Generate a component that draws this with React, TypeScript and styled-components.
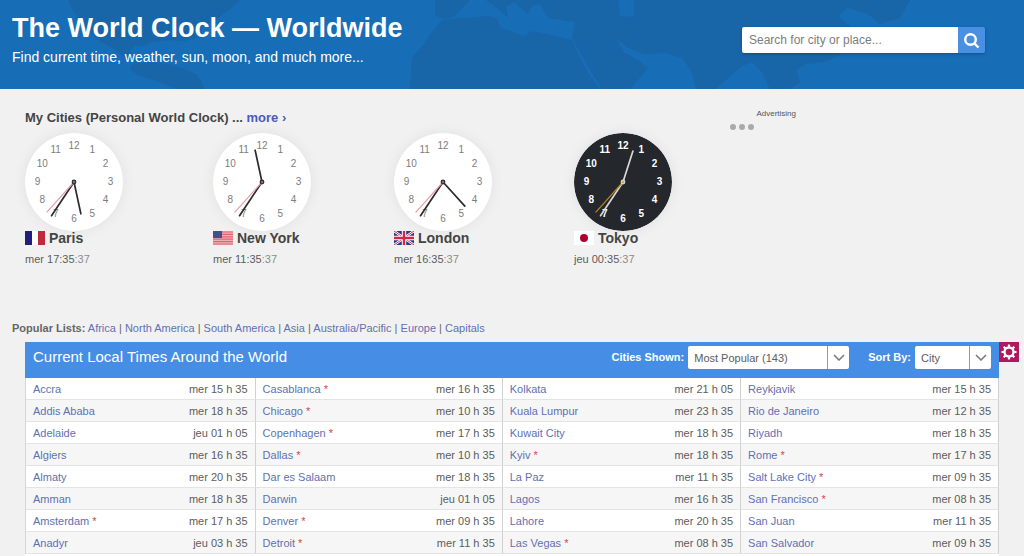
import React from "react";
import styled, { createGlobalStyle } from "styled-components";

const GlobalStyle = createGlobalStyle`
  *, *::before, *::after { box-sizing: border-box; }
  body {
    margin: 0;
    background: #f1f1f1;
    color: #5c5c5c;
    font: 11px/16px "Liberation Sans", Arial, sans-serif;
  }
  a { color: #6170b4; text-decoration: none; }
`;

const Header = styled.header`
  position: relative;
  display: flex;
  justify-content: space-between;
  align-items: flex-start;
  height: 89px;
  padding: 12px 39px 0 12px;
  overflow: hidden;
  background: #176db6;
  color: #fff;
`;

const WorldMap = styled.svg`
  position: absolute;
  inset: 0;
  width: 100%;
  height: 100%;
  fill: #1865a8;
`;

const Heading = styled.div`
  position: relative;
`;

const Title = styled.h1`
  margin: 0;
  font-size: 27px;
  line-height: 32px;
`;

const Subtitle = styled.p`
  margin: 4px 0 0;
  font-size: 14px;
  line-height: 18px;
`;

const Search = styled.form`
  position: relative;
  display: flex;
  margin-top: 15px;
  border-radius: 2px;
  overflow: hidden;
  box-shadow: 0 1px 3px rgba(0, 0, 0, 0.25);
`;

const SearchInput = styled.input`
  width: 216px;
  height: 26px;
  padding: 0 7px;
  border: 0;
  background: #fff;
  color: #555;
  font: 12px "Liberation Sans", Arial, sans-serif;
  &::placeholder { color: #7d7d7d; opacity: 1; }
`;

const SearchButton = styled.button`
  display: flex;
  align-items: center;
  justify-content: center;
  width: 27px;
  padding: 0;
  border: 0;
  background: #4a90e2;
`;

const Top = styled.section`
  display: flex;
  height: 232px;
  padding: 20px 25px 0;
`;

const MyCities = styled.div`
  flex: 0 1 688px;
`;

const MyCitiesTitle = styled.h2`
  margin: 0;
  color: #444;
  font-size: 13px;
  line-height: 18px;
  a { color: #4a5cb8; }
`;

const Clocks = styled.div`
  display: grid;
  grid-template-columns: 188fr 181fr 180fr 139fr;
  margin-top: 6px;
`;

const Face = styled.svg`
  display: block;
  width: 98px;
  height: 98px;
  border-radius: 50%;
  box-shadow: 0 0 14px rgba(0, 0, 0, 0.07);
`;

const CityName = styled.h3`
  display: flex;
  align-items: center;
  gap: 4px;
  margin: 0;
  color: #444;
  font-size: 14px;
  line-height: 14px;
`;

const Flag = styled.svg`
  width: 20px;
  height: 14px;
`;

const CityTime = styled.p`
  margin: 6px 0 0;
  line-height: 16px;
`;

const Seconds = styled.span`
  color: #8c8c8c;
`;

const Advert = styled.aside`
  width: 66px;
  margin-left: 17px;
  color: #555;
  font-size: 8px;
  line-height: 10px;
  text-align: right;
`;

const Dots = styled.div`
  display: flex;
  gap: 3px;
  margin-top: 5px;
`;

const Dot = styled.i`
  width: 6px;
  height: 6px;
  border-radius: 50%;
  background: #aaa;
`;

const PopularLists = styled.nav`
  height: 21px;
  padding-left: 12px;
  line-height: 14px;
  color: #666;
`;

const Listing = styled.section`
  display: flex;
  align-items: flex-start;
  padding: 0 5px 0 25px;
`;

const Panel = styled.div`
  flex: 1;
  padding-bottom: 2px;
  background: #fff;
`;

const PanelBar = styled.div`
  display: flex;
  align-items: flex-start;
  height: 36px;
  padding: 4px 8px 0;
  background: #468ee5;
  color: #fff;
`;

const PanelTitle = styled.h2`
  flex: 1;
  margin: 0;
  font-size: 15px;
  font-weight: 400;
  line-height: 22px;
`;

const Field = styled.div<{ $width: number }>`
  position: relative;
  width: ${(p) => p.$width}px;
  height: 23px;
  margin-left: 4px;
`;

const FieldLabel = styled.label`
  margin-left: 19px;
  font-weight: 700;
  line-height: 22px;
`;

const Select = styled.select`
  width: 100%;
  height: 100%;
  padding: 0 6px;
  border: 0;
  border-radius: 2px;
  appearance: none;
  background: #fff;
  color: #5c5c5c;
  font: 11px "Liberation Sans", Arial, sans-serif;
`;

const SelectArrow = styled.span`
  position: absolute;
  top: 0;
  right: 0;
  display: flex;
  align-items: center;
  justify-content: center;
  width: 22px;
  height: 100%;
  border-left: 1px solid #999;
  pointer-events: none;
`;

const SettingsButton = styled.button`
  display: flex;
  align-items: center;
  justify-content: center;
  width: 20px;
  height: 20px;
  padding: 0;
  border: 0;
  background: #b01860;
`;

const Table = styled.table`
  width: 100%;
  border-spacing: 0;
  table-layout: fixed;
  background: #fff;
  border-left: 1px solid #d6d6d6;
`;

const Row = styled.tr`
  height: 22px;
  &:nth-child(even) { background: #f6f6f6; }
`;

const NameCell = styled.td`
  padding: 0 0 0 7px;
  border-bottom: 1px solid #e4e4e4;
  white-space: nowrap;
`;

const TimeCell = styled.td`
  padding: 0 7px 0 0;
  border-right: 1px solid #d0d0d0;
  border-bottom: 1px solid #e4e4e4;
  text-align: right;
  white-space: nowrap;
`;

const Star = styled.span`
  color: #d0445a;
`;

const columnWidths = ["13%", "10.6%", "14%", "11.4%", "13.5%", "11%", "14.5%", "12%"];

const rows = [
  ["Accra", "mer 15 h 35", "Casablanca *", "mer 16 h 35", "Kolkata", "mer 21 h 05", "Reykjavik", "mer 15 h 35"],
  ["Addis Ababa", "mer 18 h 35", "Chicago *", "mer 10 h 35", "Kuala Lumpur", "mer 23 h 35", "Rio de Janeiro", "mer 12 h 35"],
  ["Adelaide", "jeu 01 h 05", "Copenhagen *", "mer 17 h 35", "Kuwait City", "mer 18 h 35", "Riyadh", "mer 18 h 35"],
  ["Algiers", "mer 16 h 35", "Dallas *", "mer 10 h 35", "Kyiv *", "mer 18 h 35", "Rome *", "mer 17 h 35"],
  ["Almaty", "mer 20 h 35", "Dar es Salaam", "mer 18 h 35", "La Paz", "mer 11 h 35", "Salt Lake City *", "mer 09 h 35"],
  ["Amman", "mer 18 h 35", "Darwin", "jeu 01 h 05", "Lagos", "mer 16 h 35", "San Francisco *", "mer 08 h 35"],
  ["Amsterdam *", "mer 17 h 35", "Denver *", "mer 09 h 35", "Lahore", "mer 20 h 35", "San Juan", "mer 11 h 35"],
  ["Anadyr", "jeu 03 h 35", "Detroit *", "mer 11 h 35", "Las Vegas *", "mer 08 h 35", "San Salvador", "mer 09 h 35"],
];

const lists = ["Africa", "North America", "South America", "Asia", "Australia/Pacific", "Europe", "Capitals"];

const flags: Record<string, React.ReactNode> = {
  fr: (
    <>
      <path fill="#fff" d="M0 0h20v14H0z" />
      <path fill="#20207c" d="M0 0h7v14H0z" />
      <path fill="#c0283c" d="M13 0h7v14h-7z" />
    </>
  ),
  us: (
    <>
      <path fill="#f0b0b4" d="M0 0h20v14H0z" />
      <path stroke="#dc6874" strokeWidth="1.2" d="M0 1h20M0 3.4h20M0 5.800h20M0 8.200h20M0 10.600h20M0 13h20" />
      <path fill="#3c5488" d="M0 0h9v7H0z" />
    </>
  ),
  gb: (
    <>
      <path fill="#263c8c" d="M0 0h20v14H0z" />
      <path stroke="#fff" strokeWidth="2.4" d="M0 0l20 14M20 0L0 14" />
      <path stroke="#d0304c" strokeWidth="1" d="M0 0l20 14M20 0L0 14" />
      <path stroke="#fff" strokeWidth="4.400" d="M10 0v14M0 7h20" />
      <path stroke="#d02848" strokeWidth="2.400" d="M10 0v14M0 7h20" />
    </>
  ),
  jp: (
    <>
      <path fill="#fff" d="M0 0h20v14H0z" />
      <circle cx="10" cy="7" r="4" fill="#b0002c" />
    </>
  ),
};

const cities = [
  { name: "Paris", flag: "fr", day: "mer", hour: 17, night: false },
  { name: "New York", flag: "us", day: "mer", hour: 11, night: false },
  { name: "London", flag: "gb", day: "mer", hour: 16, night: false },
  { name: "Tokyo", flag: "jp", day: "jeu", hour: 0, night: true },
];

function ClockFace({ hour, night }: { hour: number; night: boolean }) {
  const hand = night ? "#d8d8d8" : "#2c2c2c";
  return (
    <Face viewBox="0 0 98 98" aria-hidden="true">
      <circle cx="49" cy="49" r="49" fill={night ? "#24272b" : "#fff"} />
      <g fill={night ? "#fff" : "#7c7c7c"} fontSize="10" fontWeight={night ? 700 : 400} textAnchor="middle">
        {Array.from({ length: 12 }, (_, i) => {
          const angle = ((i + 1) * Math.PI) / 6;
          return (
            <text key={i} x={49 + 36.5 * Math.sin(angle)} y={52 - 36.5 * Math.cos(angle)}>
              {i + 1}
            </text>
          );
        })}
      </g>
      <g strokeLinecap="round">
        <path d="M49 49V16.500" stroke={hand} strokeWidth="1.700" transform={`rotate(${(hour % 12) * 30 + 17.8} 49 49)`} />
        <path d="M49 49V8.500" stroke={hand} strokeWidth="1.700" transform="rotate(213.700 49 49)" />
        <path d="M49 49V8.500" stroke={night ? "#b48420" : "#e8a0a8"} strokeWidth="1.200" transform="rotate(222 49 49)" />
      </g>
      <circle cx="49" cy="49" r="1.800" fill={night ? "#c8a850" : "#8c6c6c"} stroke={hand} strokeWidth="1.200" />
    </Face>
  );
}

function Chevron() {
  return (
    <SelectArrow>
      <svg width="12" height="7" viewBox="0 0 12 7" fill="none" stroke="#777" strokeWidth="1.500">
        <path d="M1 1l5 5 5-5" />
      </svg>
    </SelectArrow>
  );
}

function CityCell({ name }: { name: string }) {
  const dst = name.endsWith(" *");
  return (
    <NameCell>
      <a href="#city">{dst ? name.slice(0, -2) : name}</a>
      {dst && <Star> *</Star>}
    </NameCell>
  );
}

export default function App() {
  return (
    <>
      <GlobalStyle />
      <Header>
        <WorldMap viewBox="0 0 1024 89" preserveAspectRatio="none" aria-hidden="true">
          <path d="M68 0H240L232 8 218 18 204 26 196 38 184 41 170 40 152 42 144 46 136 45 130 50 132 58 140 62 138 64 126 58 112 48 98 40 88 30 80 20 74 12Z" />
          <path d="M132 64L150 62 168 64 182 68 196 74 202 82 204 89H176L160 82 140 76 130 70Z" />
          <path d="M435 0H470L462 8 454 17 446 19 435 16Z" />
          <path d="M442 20L466 18 488 16 497 18 500 27 512 32 524 36 532 31 546 34 560 37 572 40 580 58 590 76 600 89H410L412 58 424 44 430 34Z" />
          <path d="M486 0L500 10 508 18 506 6 514 2 528 14 532 6 540 4 548 18 575 22 572 38 580 52 590 70 602 89H630L648 68 640 62 624 52 616 38 628 48 644 54 666 53 682 58 692 72 696 89H716L728 78 742 66 752 62 762 72 770 89H790L800 82 796 70 806 64 824 62 840 55 850 40 850 26 838 16 848 8 868 14 880 24 900 18 910 0H634L634 17 620 16 618 0Z" />
        </WorldMap>
        <Heading>
          <Title>The World Clock — Worldwide</Title>
          <Subtitle>Find current time, weather, sun, moon, and much more...</Subtitle>
        </Heading>
        <Search onSubmit={(e) => e.preventDefault()}>
          <SearchInput type="text" aria-label="Search for city or place" placeholder="Search for city or place..." />
          <SearchButton type="submit" aria-label="Search">
            <svg width="17" height="17" viewBox="0 0 17 17" fill="none" stroke="#fff" strokeWidth="2.400">
              <circle cx="7.500" cy="7.500" r="5.300" />
              <path d="M11.300 11.300L15.500 15.500" />
            </svg>
          </SearchButton>
        </Search>
      </Header>
      <main>
        <Top>
          <MyCities>
            <MyCitiesTitle>
              My Cities (Personal World Clock) ... <a href="#more">more ›</a>
            </MyCitiesTitle>
            <Clocks>
              {cities.map((c) => (
                <div key={c.name}>
                  <ClockFace hour={c.hour} night={c.night} />
                  <CityName>
                    <Flag viewBox="0 0 20 14" aria-hidden="true">{flags[c.flag]}</Flag>
                    {c.name}
                  </CityName>
                  <CityTime>
                    {c.day} {String(c.hour).padStart(2, "0")}:35<Seconds>:37</Seconds>
                  </CityTime>
                </div>
              ))}
            </Clocks>
          </MyCities>
          <Advert>
            Advertising
            <Dots><Dot /><Dot /><Dot /></Dots>
          </Advert>
        </Top>
        <PopularLists>
          <b>Popular Lists:</b>{" "}
          {lists.map((name, i) => (
            <React.Fragment key={name}>
              {i > 0 && " | "}
              <a href="#list">{name}</a>
            </React.Fragment>
          ))}
        </PopularLists>
        <Listing>
          <Panel>
            <PanelBar>
              <PanelTitle>Current Local Times Around the World</PanelTitle>
              <FieldLabel htmlFor="shown">Cities Shown:</FieldLabel>
              <Field $width={161}>
                <Select id="shown"><option>Most Popular (143)</option></Select>
                <Chevron />
              </Field>
              <FieldLabel htmlFor="sort">Sort By:</FieldLabel>
              <Field $width={76}>
                <Select id="sort"><option>City</option></Select>
                <Chevron />
              </Field>
            </PanelBar>
            <Table>
              <colgroup>
                {columnWidths.map((width, i) => <col key={i} style={{ width }} />)}
              </colgroup>
              <tbody>
                {rows.map((r) => (
                  <Row key={r[0]}>
                    {[0, 2, 4, 6].map((i) => (
                      <React.Fragment key={i}>
                        <CityCell name={r[i]} />
                        <TimeCell>{r[i + 1]}</TimeCell>
                      </React.Fragment>
                    ))}
                  </Row>
                ))}
              </tbody>
            </Table>
          </Panel>
          <SettingsButton type="button" aria-label="Settings">
            <svg width="16" height="16" viewBox="0 0 16 16" fill="none" stroke="#fff">
              <circle cx="8" cy="8" r="4.500" strokeWidth="2.400" />
              <path strokeWidth="2.200" d="M8 .5v2.500M8 13v2.500M.5 8h2.500M13 8h2.500M2.700 2.700l1.800 1.800M11.500 11.500l1.800 1.800M2.700 13.300l1.800-1.800M11.500 4.500l1.800-1.800" />
            </svg>
          </SettingsButton>
        </Listing>
      </main>
    </>
  );
}
